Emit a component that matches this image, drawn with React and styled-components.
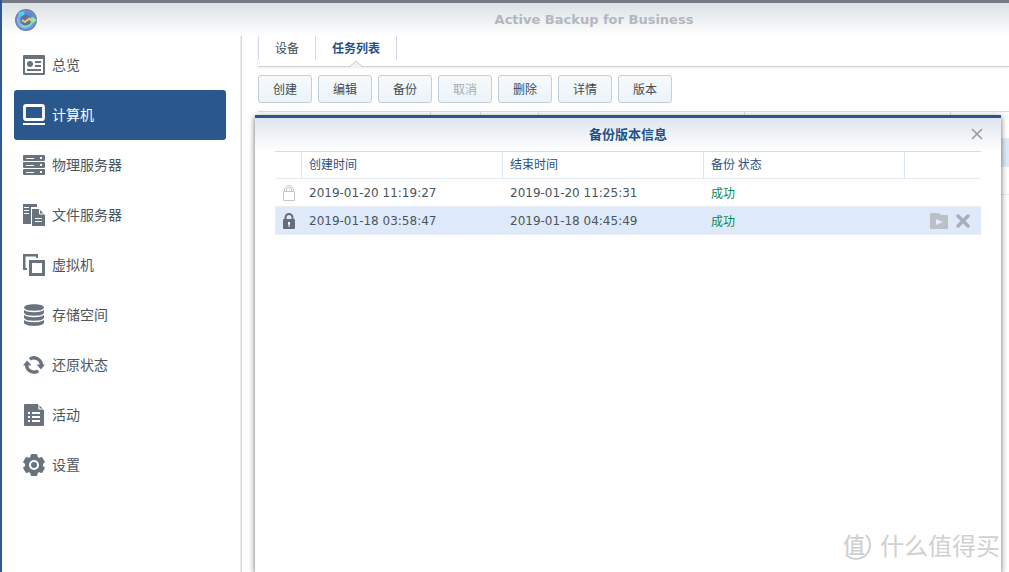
import React from "react";
import styled, { createGlobalStyle, css } from "styled-components";

const GlobalStyle = createGlobalStyle`
  *, *::before, *::after { box-sizing: border-box; }
  body {
    margin: 0;
    background: #fff;
    color: #4b5560;
    font: 12px/16px "DejaVu Sans", "Noto Sans CJK SC", sans-serif;
  }
  button { font: inherit; color: inherit; margin: 0; cursor: pointer; }
`;

const cjk = css`
  font-family: "Noto Sans CJK SC", "DejaVu Sans", sans-serif;
`;

const Window = styled.div`
  display: flex;
  flex-direction: column;
  position: relative;
  height: 100vh;
  min-height: 480px;
  overflow: hidden;
  background: #fff;
  border-left: 2px solid #2a5898;
`;

const TitleBar = styled.header`
  display: flex;
  align-items: center;
  flex: none;
  height: 36px;
  padding: 0 0 0 13px;
  border-top: 3px solid #767a85;
  background: linear-gradient(#dce1e5, #fff);
`;

const AppTitle = styled.h1`
  flex: 1;
  margin: 0;
  padding-left: 142px;
  text-align: center;
  font-size: 13px;
  line-height: 20px;
  font-weight: bold;
  color: #b1b8c0;
`;

const Body = styled.div`
  display: flex;
  flex: 1;
  min-height: 0;
`;

const Sidebar = styled.nav`
  flex: none;
  width: 240px;
  padding: 4px 15px 0 12px;
  border-right: 1px solid #d4d6d8;
  box-shadow: inset -2px 0 1px -1px #e8e9ea;
`;

const NavItem = styled.a`
  ${cjk}
  display: flex;
  align-items: center;
  gap: 7px;
  height: 50px;
  padding-left: 9px;
  border-radius: 3px;
  font-size: 14px;
  line-height: 20px;
  text-decoration: none;
  color: ${(p) => (p.$active ? "#fff" : "#4b5560")};
  background: ${(p) => (p.$active ? "#2a588c" : "transparent")};
  svg { color: ${(p) => (p.$active ? "#fff" : "#69737e")}; }
`;

const NavLabel = styled.span`
  padding-bottom: 2px;
`;

const Glyph = styled.svg`
  display: block;
  flex: none;
`;

const Main = styled.main`
  position: relative;
  flex: 1;
  min-width: 0;
`;

const Content = styled.div`
  padding-left: 16px;
`;

const Tabs = styled.div`
  display: flex;
  height: 31px;
  border-bottom: 1px solid #d0d2d4;
  box-shadow: 0 1px 2px #ececec;
`;

const Tab = styled.button`
  ${cjk}
  position: relative;
  height: 24px;
  padding: 0 16px;
  border: 0;
  border-right: 1px solid #cfdbe8;
  background: none;
  line-height: 24px;
  font-weight: ${(p) => (p.$active ? 700 : 400)};
  color: ${(p) => (p.$active ? "#1f5189" : "#414b55")};
  &:first-child { border-left: 1px solid #cfdbe8; }
`;

const Notch = styled.svg`
  position: absolute;
  left: 50%;
  top: 100%;
  margin-left: -7px;
`;

const Toolbar = styled.div`
  display: flex;
  gap: 6px;
  padding: 8px 0;
`;

const ToolButton = styled.button`
  ${cjk}
  width: 54px;
  height: 28px;
  padding: 0;
  border: 1px solid #c3cfdb;
  border-radius: 3px;
  background: linear-gradient(#f6fafd, #ecf3f8);
  line-height: 24px;
  color: #414b55;
  &:disabled { color: #a3abb4; }
`;

const TaskTable = styled.table`
  width: 100%;
  table-layout: fixed;
  border-collapse: separate;
  border-spacing: 0;
  border-top: 1px solid #d3dfec;
  th, td { height: 28px; padding: 0; border-bottom: 1px solid #e6edf4; }
  th { height: 27px; border-right: 1px solid #d6e3f2; }
  th:last-child { border-right: 0; }
`;

const TaskRow = styled.tr`
  background: ${(p) => (p.$selected ? "#deeafa" : "transparent")};
`;

const Dialog = styled.section`
  display: flex;
  flex-direction: column;
  position: absolute;
  top: 79px;
  left: 13px;
  right: 8px;
  bottom: 0;
  border-top: 3px solid #27578e;
  background: #fff linear-gradient(#dfe5ef, #fff) no-repeat 0 0 / 100% 34px;
  box-shadow: 0 2px 6px rgba(0, 0, 0, 0.6);
`;

const DialogHeader = styled.header`
  display: flex;
  align-items: center;
  height: 33px;
  padding: 0 17px 2px 31px;
`;

const DialogTitle = styled.h2`
  ${cjk}
  flex: 1;
  margin: 0;
  text-align: center;
  font-size: 13px;
  line-height: 20px;
  font-weight: 700;
  color: #1f5189;
`;

const IconButton = styled.button`
  display: block;
  padding: 0;
  border: 0;
  background: none;
`;

const VersionTable = styled.table`
  width: calc(100% - 40px);
  margin: 0 20px;
  table-layout: fixed;
  border-collapse: separate;
  border-spacing: 0;
  border-top: 1px solid #d0ddeb;
`;

const HeadCell = styled.th`
  ${cjk}
  height: 27px;
  padding: 0 8px 2px 7px;
  border-bottom: 1px solid #e6ecf3;
  border-right: 1px solid #dbe6f4;
  text-align: left;
  font-weight: 400;
  color: #2a5083;
  &:last-child { border-right: 0; }
`;

const VersionRow = styled.tr`
  background: ${(p) => (p.$selected ? "#deeafa" : "transparent")};
`;

const Cell = styled.td`
  height: 28px;
  padding: 0 9px 0 7px;
  border-bottom: 1px solid #e8eef4;
  color: #4b5560;
`;

const LockCell = styled(Cell)`
  padding: 0 7px 0 8px;
`;

const StatusCell = styled(Cell)`
  ${cjk}
  color: #0d8a50;
`;

const Actions = styled.div`
  display: flex;
  justify-content: flex-end;
  align-items: center;
  gap: 6px;
`;

const Watermark = styled.div`
  ${cjk}
  position: absolute;
  right: 9px;
  bottom: 10px;
  display: flex;
  align-items: center;
  gap: 9px;
  font-size: 24px;
  line-height: 34px;
  color: #d0d0d0;
  pointer-events: none;
`;

const Seal = styled.span`
  display: block;
  width: 30px;
  height: 30px;
  border: 2px solid #d0d0d0;
  border-left-color: transparent;
  border-top-color: transparent;
  border-radius: 50%;
  font-size: 22px;
  line-height: 22px;
  font-weight: 500;
`;

const Logo = () => (
  <Glyph width="22" height="22" viewBox="0 0 22 22" aria-hidden="true">
    <circle cx="11" cy="11" r="11" fill="#6f7fae" />
    <circle cx="11" cy="11" r="9.500" fill="#6aa0e2" />
    <path d="M8 4A8 8 0 0 1 18 8" fill="none" stroke="#5c8bdc" strokeWidth="3" />
    <path d="M5 6A7.500 7.500 0 0 0 11 18.500" fill="none" stroke="#78b8ee" strokeWidth="2" />
    <path d="M2 4l8-2-2 6z" fill="#52d2f0" />
    <circle cx="11" cy="11" r="5.500" fill="#5f709f" />
    <path d="M6 16a7 7 0 0 0 11-3" fill="none" stroke="#88d9c4" strokeWidth="2" />
    <path d="M14 11l3-3 5 3-4 3z" fill="#a4e68c" />
    <path d="M7 11l3 2 5-4" fill="none" stroke="#e8cc68" strokeWidth="2" />
  </Glyph>
);

const icons = {
  overview: (
    <>
      <path fill="currentColor" fillRule="evenodd" d="M1 1h20q1 0 1 1v18q0 1-1 1H1q-1 0-1-1V2q0-1 1-1zM2 5v14h18V5z" />
      <circle cx="7" cy="10" r="3" fill="currentColor" />
      <path fill="currentColor" d="M12 7h6v2h-6zM12 11h6v2h-6zM4 15h14v2H4z" />
    </>
  ),
  computer: (
    <>
      <rect x="1.500" y="1.500" width="19" height="14" rx="1.500" fill="none" stroke="currentColor" strokeWidth="2.800" />
      <path fill="currentColor" d="M0 19h22v2H0z" />
    </>
  ),
  server: (
    <>
      {[1, 8, 15].map((y) => (
        <g key={y}>
          <rect x="0" y={y} width="22" height="6" rx="1" fill="currentColor" />
          <path d={`M3 ${y + 3}.5h8`} stroke="#fff" strokeWidth="1" />
          <rect x="17" y={y + 2} width="2" height="2" fill="#fff" />
        </g>
      ))}
    </>
  ),
  files: (
    <>
      <path fill="currentColor" d="M0 0h14v3H8v17H0z" />
      <path d="M1 3.500h5M1 6.500h5M1 9.500h5" stroke="#fff" />
      <path fill="currentColor" d="M9 5h7l6 6v11H9z" />
      <path d="M16.500 5.500v4.500h5" stroke="#fff" fill="none" />
      <path d="M12 14.500h7M12 17.500h7" stroke="#fff" />
    </>
  ),
  vm: (
    <>
      <path fill="currentColor" d="M0 0h15v4h-2V2.500H2.500V14H4v2H0z" />
      <path fill="currentColor" fillRule="evenodd" d="M6 6h16v16H6zM9 9v10h10V9z" />
    </>
  ),
  storage: (
    <>
      <path fill="currentColor" d="M1 3.500C1-1 21-1 21 3.500v15C21 23 1 23 1 18.500z" />
      <path d="M1 4.500c1 4 19 4 20 0M1 9.500c1 4 19 4 20 0M1 14.500c1 4 19 4 20 0" fill="none" stroke="#fff" strokeWidth="1.300" />
    </>
  ),
  restore: (
    <>
      <path d="M6.800 5.200A7.400 7.400 0 0 1 18.400 11" fill="none" stroke="currentColor" strokeWidth="3.400" />
      <path d="M15.200 16.800A7.400 7.400 0 0 1 3.600 11" fill="none" stroke="currentColor" strokeWidth="3.400" />
      <path fill="currentColor" d="M0 11.500L4 6.500l4.500 5z" />
      <path fill="currentColor" d="M22 10.500l-4 5-4.500-5z" />
    </>
  ),
  activity: (
    <>
      <path fill="currentColor" d="M2 0h13l6 6v15q0 1-1 1H2q-1 0-1-1V1q0-1 1-1z" />
      <path d="M16 0v5h5" fill="none" stroke="#fff" strokeWidth="1.200" />
      <path fill="#fff" d="M5 8h2v2H5zM9 8h8v2H9zM5 12h2v2H5zM9 12h8v2H9zM5 16h2v2H5zM9 16h8v2H9z" />
    </>
  ),
  settings: (
    <>
      <circle cx="11" cy="11" r="9" fill="currentColor" />
      {[0, 60, 120, 180, 240, 300].map((angle) => (
        <rect key={angle} x="7.500" y="0" width="7" height="5" rx="1.500" fill="currentColor" transform={`rotate(${angle} 11 11)`} />
      ))}
      <circle cx="11" cy="11" r="4" fill="none" stroke="#fff" strokeWidth="2" />
    </>
  ),
};

const NavIcon = ({ name }) => (
  <Glyph width="22" height="22" viewBox="0 0 22 22" aria-hidden="true">
    {icons[name]}
  </Glyph>
);

const LockIcon = ({ locked }) =>
  locked ? (
    <Glyph width="12" height="16" viewBox="0 0 12 16" aria-label="已锁定">
      <path d="M2.500 8V4.500a3.500 3.500 0 0 1 7 0V8" fill="none" stroke="#646e79" strokeWidth="2" />
      <rect x="0" y="6" width="12" height="10" rx="1" fill="#646e79" />
      <path d="M5 9h2v2.500h-.5V14h-1v-2.500H5z" fill="#fff" />
    </Glyph>
  ) : (
    <Glyph width="12" height="16" viewBox="0 0 12 16" aria-label="未锁定">
      <path d="M1.500 6.500V5a4.500 4.500 0 0 1 9 0v1.500M3.500 6.500V5a2.500 2.500 0 0 1 5 0v1.500" fill="none" stroke="#c3c5c8" />
      <rect x=".5" y="6.500" width="11" height="9" rx=".5" fill="#fff" stroke="#c3c5c8" />
    </Glyph>
  );

const nav = [
  ["overview", "总览"],
  ["computer", "计算机"],
  ["server", "物理服务器"],
  ["files", "文件服务器"],
  ["vm", "虚拟机"],
  ["storage", "存储空间"],
  ["restore", "还原状态"],
  ["activity", "活动"],
  ["settings", "设置"],
];

const tools = ["创建", "编辑", "备份", "取消", "删除", "详情", "版本"];

const taskColumns = [173, 50, 58, 206, 206, null];

const versions = [
  { start: "2019-01-20 11:19:27", end: "2019-01-20 11:25:31", status: "成功", locked: false },
  { start: "2019-01-18 03:58:47", end: "2019-01-18 04:45:49", status: "成功", locked: true },
];

function VersionDialog() {
  return (
    <Dialog role="dialog" aria-labelledby="version-title">
      <DialogHeader>
        <DialogTitle id="version-title">备份版本信息</DialogTitle>
        <IconButton type="button" aria-label="关闭">
          <Glyph width="14" height="12" viewBox="0 0 14 12">
            <path d="M2 1l10 10M12 1L2 11" stroke="#989da4" strokeWidth="1.700" />
          </Glyph>
        </IconButton>
      </DialogHeader>
      <VersionTable>
        <colgroup>
          <col width="27" />
          <col />
          <col />
          <col />
          <col width="76" />
        </colgroup>
        <thead>
          <tr>
            <HeadCell />
            <HeadCell>创建时间</HeadCell>
            <HeadCell>结束时间</HeadCell>
            <HeadCell>备份 状态</HeadCell>
            <HeadCell />
          </tr>
        </thead>
        <tbody>
          {versions.map((v) => (
            <VersionRow key={v.start} $selected={v.locked}>
              <LockCell><LockIcon locked={v.locked} /></LockCell>
              <Cell>{v.start}</Cell>
              <Cell>{v.end}</Cell>
              <StatusCell>{v.status}</StatusCell>
              <Cell>
                {v.locked && (
                  <Actions>
                    <IconButton type="button" aria-label="还原">
                      <Glyph width="18" height="16" viewBox="0 0 18 16">
                        <path d="M1 0h8l2 2h6q1 0 1 1v12q0 1-1 1H1q-1 0-1-1V1q0-1 1-1z" fill="#bcbfc4" />
                        <path d="M6 6l7 3-7 3z" fill="#e2edfb" />
                      </Glyph>
                    </IconButton>
                    <IconButton type="button" aria-label="删除版本">
                      <Glyph width="18" height="16" viewBox="0 0 18 16">
                        <path d="M4 3l10 10M14 3L4 13" stroke="#a7afba" strokeWidth="3.500" strokeLinecap="round" />
                      </Glyph>
                    </IconButton>
                  </Actions>
                )}
              </Cell>
            </VersionRow>
          ))}
        </tbody>
      </VersionTable>
    </Dialog>
  );
}

export default function App() {
  return (
    <Window>
      <GlobalStyle />
      <TitleBar>
        <Logo />
        <AppTitle>Active Backup for Business</AppTitle>
      </TitleBar>
      <Body>
        <Sidebar>
          {nav.map(([icon, label]) => (
            <NavItem key={icon} href={`#${icon}`} $active={icon === "computer"}>
              <NavIcon name={icon} />
              <NavLabel>{label}</NavLabel>
            </NavItem>
          ))}
        </Sidebar>
        <Main>
          <Content>
            <Tabs>
              <Tab type="button">设备</Tab>
              <Tab type="button" $active>
                任务列表
                <Notch width="14" height="7" viewBox="0 0 14 7" aria-hidden="true">
                  <path d="M0 7l7-6 7 6z" fill="#f1f1f2" />
                  <path d="M0 6.500h1l6-5.500 6 5.500h1" fill="none" stroke="#c6c8ca" />
                </Notch>
              </Tab>
            </Tabs>
            <Toolbar>
              {tools.map((label) => (
                <ToolButton key={label} type="button" disabled={label === "取消"}>
                  {label}
                </ToolButton>
              ))}
            </Toolbar>
            <TaskTable>
              <colgroup>
                {taskColumns.map((w, i) => (
                  <col key={i} width={w ?? undefined} />
                ))}
              </colgroup>
              <thead>
                <tr>{taskColumns.map((_, i) => <th key={i} />)}</tr>
              </thead>
              <tbody>
                <TaskRow $selected>{taskColumns.map((_, i) => <td key={i} />)}</TaskRow>
                <TaskRow>{taskColumns.map((_, i) => <td key={i} />)}</TaskRow>
              </tbody>
            </TaskTable>
          </Content>
          <VersionDialog />
        </Main>
      </Body>
      <Watermark>
        <Seal>值</Seal>
        <span>什么值得买</span>
      </Watermark>
    </Window>
  );
}
